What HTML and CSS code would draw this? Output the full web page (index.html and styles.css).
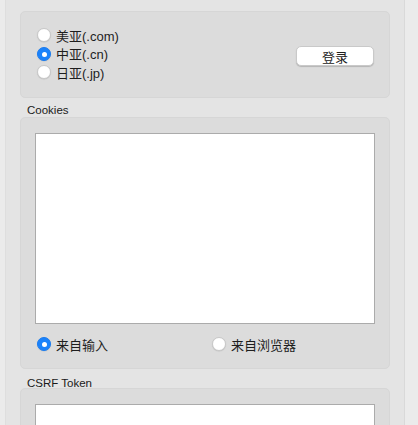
FILE: index.html
```html
<!DOCTYPE html>
<html>
<head>
<meta charset="utf-8">
<link rel="stylesheet" href="styles.css">
</head>
<body>
<div class="window">
  <div class="edge-left"></div>
  <div class="main">
    <div class="box box-site">
      <div class="radios">
        <label class="radio"><span class="dot"></span><span>美亚(.com)</span></label>
        <label class="radio"><span class="dot on"></span><span>中亚(.cn)</span></label>
        <label class="radio"><span class="dot"></span><span>日亚(.jp)</span></label>
      </div>
      <button class="btn">登录</button>
    </div>

    <div class="group-label">Cookies</div>
    <div class="box box-cookies">
      <div class="textarea"></div>
      <div class="source-row">
        <label class="radio src-a"><span class="dot on"></span><span>来自输入</span></label>
        <label class="radio"><span class="dot"></span><span>来自浏览器</span></label>
      </div>
    </div>

    <div class="group-label csrf">CSRF Token</div>
    <div class="box box-csrf">
      <div class="textfield"></div>
    </div>
  </div>
  <div class="edge-right"></div>
</div>
</body>
</html>
```
FILE: styles.css
```css
html, body {
  margin: 0;
  padding: 0;
  height: 100%;
  overflow: hidden;
}
body {
  font-family: "Liberation Sans", "Noto Sans CJK SC", sans-serif;
  font-size: 13px;
  color: #1e1e1e;
  background: #e5e5e5;
}
.window {
  display: flex;
  height: 425px;
  overflow: hidden;
}
.edge-left {
  width: 5px;
  flex: none;
  background: #ebebeb;
  border-right: 1px solid #dedede;
}
.main {
  width: 398px;
  flex: none;
  box-sizing: border-box;
  padding: 11px 14px 0 14px;
  background: #e4e4e4;
}
.edge-right {
  flex: 1;
  background: #ebebeb;
  border-left: 1px solid #d9d9d9;
}
.box {
  background: #dcdcdc;
  border: 1px solid #d6d6d6;
  border-radius: 5px;
  box-sizing: border-box;
}
.box-site {
  height: 87px;
  display: flex;
  align-items: center;
  justify-content: space-between;
  padding: 0 15px 0 16px;
}
.radios {
  display: flex;
  flex-direction: column;
  margin-top: -2px;
}
.radio {
  display: flex;
  align-items: center;
  height: 18.5px;
  gap: 5px;
  white-space: nowrap;
}
.dot {
  width: 14px;
  height: 14px;
  border-radius: 50%;
  background: #fff;
  box-sizing: border-box;
  border: 0.5px solid #c8c8c8;
  box-shadow: 0 0.5px 1px rgba(0,0,0,0.12);
  position: relative;
  flex: none;
}
.dot.on {
  background: #1a82fb;
  border-color: #1a7cf0;
}
.dot.on::after {
  content: "";
  position: absolute;
  left: 4px;
  top: 4px;
  width: 5px;
  height: 5px;
  border-radius: 50%;
  background: #fff;
}
.btn {
  width: 78px;
  height: 20px;
  margin-top: 2px;
  padding: 0;
  background: #fff;
  border: 0.5px solid #c9c9c9;
  border-radius: 5px;
  box-shadow: 0 1px 1px rgba(0,0,0,0.18);
  font-family: "Liberation Sans", "Noto Sans CJK SC", sans-serif;
  font-size: 13px;
  color: #222;
}
.group-label {
  font-size: 11.5px;
  height: 19px;
  line-height: 13px;
  padding: 6px 0 0 7px;
  box-sizing: border-box;
  color: #1a1a1a;
}
.group-label.csrf {
  padding-top: 7px;
  line-height: 15px;
}
.box-cookies {
  height: 252px;
  padding: 15px 14px 0 14px;
}
.textarea {
  height: 191px;
  background: #fff;
  border: 1px solid #ababab;
  box-sizing: border-box;
}
.source-row {
  display: flex;
  margin-top: 11px;
  padding-left: 2px;
}
.src-a {
  width: 175px;
}
.box-csrf {
  height: 60px;
  padding: 15px 14px 0 14px;
}
.textfield {
  height: 22px;
  background: #fff;
  border: 1px solid #ababab;
  box-sizing: border-box;
}
```
